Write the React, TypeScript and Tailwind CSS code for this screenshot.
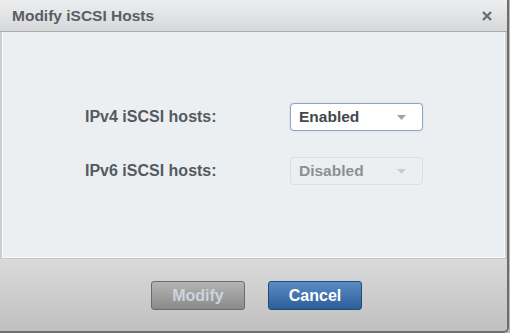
const font = { fontFamily: '"Liberation Sans", Arial, sans-serif' }

const Caret = ({ light }: { light?: boolean }) => (
  <svg width="9" height="5" viewBox="0 0 9 5" className="ml-auto mr-[16px]">
    <path d="M0 0h9L4.5 5z" fill={light ? '#c8ccd0' : '#9aa3ad'} />
  </svg>
)

const HostRow = ({
  label,
  value,
  disabled
}: {
  label: string
  value: string
  disabled?: boolean
}) => (
  <div className="flex items-center">
    <span className="w-[205px] text-[16px] font-bold text-[#555a5f]">{label}</span>
    <div
      className={
        disabled
          ? 'flex h-[28px] w-[133px] items-center rounded-[4px] border border-[#dcdfe2] bg-[#eceef0] pl-[8px] text-[15.5px] font-bold text-[#8c9094]'
          : 'flex h-[28px] w-[133px] items-center rounded-[4px] border border-[#8fa7bf] bg-white pl-[8px] text-[15.5px] font-bold text-[#44484c] shadow-[0_0_2px_#b9cbe0]'
      }
    >
      {value}
      <Caret light={disabled} />
    </div>
  </div>
)

export default function App() {
  return (
    <div className="h-[333px] w-[510px] bg-[#b8b8b8]" style={font}>
      <div className="flex h-full w-[509px] flex-col overflow-hidden rounded-br-[6px] border-b-2 border-r-2 border-[#6e6e6e] bg-[#d0d0d0]">
        <div className="flex h-[32px] items-center border-b border-[#a8aaac] bg-gradient-to-b from-[#eceef0] to-[#d6d8da] pl-[12px] pr-[14px]">
          <span className="text-[15.5px] font-bold text-[#5a5e62]">Modify iSCSI Hosts</span>
          <svg width="10" height="10" viewBox="0 0 10 10" className="ml-auto mr-[1px]">
            <path d="M1 1l8 8M9 1l-8 8" stroke="#6a6e72" strokeWidth="2.4" />
          </svg>
        </div>
        <div className="mx-[2px] flex h-[226px] flex-col gap-[26px] border-x border-b border-[#f8f9fa] bg-[#eceff2] pl-[82px] pt-[71px]">
          <HostRow label="IPv4 iSCSI hosts:" value="Enabled" />
          <HostRow label="IPv6 iSCSI hosts:" value="Disabled" disabled />
        </div>
        <div className="flex flex-1 justify-center gap-[23px] border-t border-[#c4c6c8] bg-gradient-to-b from-[#dadada] to-[#c0c0c0] pl-[6px] pt-[22px]">
          <button className="h-[29px] w-[94px] rounded-[3px] border border-[#6a6a6a] bg-gradient-to-b from-[#b4b4b4] to-[#8a8a8a] text-[16px] font-bold text-[#ccd4dc]">
            Modify
          </button>
          <button className="h-[29px] w-[94px] rounded-[3px] border border-[#1f4a7a] bg-gradient-to-b from-[#5b8cc4] to-[#2c5e98] text-[16px] font-bold text-white">
            Cancel
          </button>
        </div>
      </div>
    </div>
  )
}
